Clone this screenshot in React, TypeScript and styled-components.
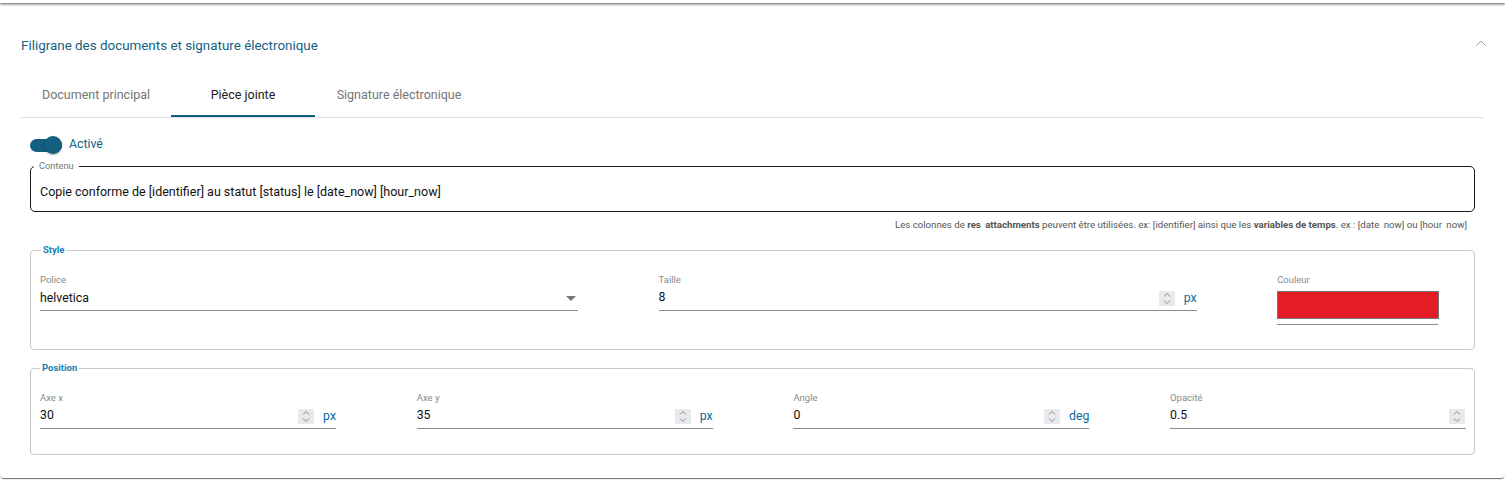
import React from 'react';
import styled, { createGlobalStyle } from 'styled-components';

const PRIMARY = '#135f7f';
const LINK = '#0b6a9a';
const LEGEND = '#1580b4';

const GlobalStyle = createGlobalStyle`
  html, body {
    margin: 0;
    padding: 0;
    background: #fff;
    font-family: Roboto, "Liberation Sans", sans-serif;
  }
`;

const Page = styled.div`
  width: 1505px;
  height: 483px;
  overflow: hidden;
`;

const TopEdge = styled.div`
  height: 3px;
  background: #fff;
  box-shadow: 0 1px 3px rgba(0, 0, 0, 0.7);
`;

const Card = styled.section`
  margin-top: 13px;
  height: 462px;
  box-sizing: border-box;
  padding: 0 21px;
  border-radius: 4px;
  background: #fff;
  box-shadow: 0 2px 1px -1px rgba(0, 0, 0, 0.5), 0 1px 1px rgba(0, 0, 0, 0.14), 0 0 1px rgba(0, 0, 0, 0.03);
`;

const Header = styled.div`
  display: flex;
  align-items: center;
  justify-content: space-between;
  height: 55px;
  padding-top: 3px;
  box-sizing: border-box;
`;

const HeaderTitle = styled.h2`
  margin: 0;
  font-size: 13.4px;
  font-weight: 400;
  color: ${PRIMARY};
`;

const Chevron = styled.svg`
  width: 12px;
  height: 8px;
  margin-top: -4px;
  margin-right: -3px;
`;

const Tabs = styled.div`
  display: flex;
  height: 47px;
  box-sizing: border-box;
  border-bottom: 1px solid #e0e0e0;
`;

const Tab = styled.div<{ $active?: boolean; $width: number }>`
  display: flex;
  align-items: center;
  justify-content: center;
  width: ${props => props.$width}px;
  height: 46px;
  padding-top: 2px;
  box-sizing: border-box;
  font-size: 12.5px;
  color: ${props => (props.$active ? '#212121' : '#757575')};
  border-bottom: 2px solid ${props => (props.$active ? PRIMARY : 'transparent')};
`;

const Content = styled.div`
  padding: 18px 9px 0;
`;

const ToggleRow = styled.div`
  display: flex;
  align-items: center;
  gap: 7px;
  height: 18px;
`;

const ToggleTrack = styled.div`
  position: relative;
  width: 32px;
  height: 13px;
  border-radius: 7px;
  background: ${PRIMARY};
`;

const ToggleThumb = styled.div`
  position: absolute;
  top: -3px;
  right: 0;
  width: 18px;
  height: 18px;
  border-radius: 50%;
  background: ${PRIMARY};
  box-shadow: 0 1px 2px rgba(0, 0, 0, 0.35);
`;

const ToggleLabel = styled.span`
  margin-top: -2px;
  font-size: 12.3px;
  color: ${PRIMARY};
`;

const ContentField = styled.fieldset`
  margin: 6px 0 0;
  padding: 0 9px;
  min-width: 0;
  height: 52px;
  box-sizing: border-box;
  border: 1px solid #1a1a1a;
  border-radius: 5px;
`;

const ContentLegend = styled.legend`
  margin-left: -6px;
  padding: 0 5px;
  font-size: 9.3px;
  line-height: 12px;
  color: #757575;
`;

const ContentValue = styled.div`
  padding-top: 1px;
  font-size: 12.5px;
  line-height: 38px;
  color: #111;
`;

const Hint = styled.p`
  margin: 7px 8px 0 0;
  font-size: 9.66px;
  line-height: 12px;
  text-align: right;
  color: #555;
`;

// les soulignés n'apparaissent pas sur la capture
const Blank = styled.span`
  color: transparent;
`;

const Group = styled.fieldset<{ $top: number; $bottom: number }>`
  margin: ${props => props.$top}px 0 0;
  padding: 18px 9px ${props => props.$bottom}px;
  min-width: 0;
  box-sizing: border-box;
  border: 1px solid #c8c8c8;
  border-radius: 4px;
`;

const GroupLegend = styled.legend<{ $shift: number }>`
  margin-left: ${props => props.$shift}px;
  padding: 0 2px;
  font-size: 9.5px;
  font-weight: 700;
  line-height: 12px;
  color: ${LEGEND};
`;

const StyleGrid = styled.div`
  display: grid;
  grid-template-columns: 538px 538px 161px;
  column-gap: 80.6px;
  align-items: start;
`;

const PositionGrid = styled.div`
  display: grid;
  grid-template-columns: repeat(4, 296px);
  column-gap: 80.7px;
`;

const FieldLabel = styled.label`
  display: block;
  font-size: 9.5px;
  line-height: 12px;
  color: #8a8a8a;
`;

const Control = styled.div`
  display: flex;
  align-items: center;
  height: 25px;
  box-sizing: border-box;
  border-bottom: 1px solid #8c8c8c;
`;

const Value = styled.span<{ $raised?: boolean }>`
  flex: 1;
  margin-top: ${props => (props.$raised ? '-3px' : '0')};
  font-size: 12.3px;
  color: #111;
`;

const Spinner = styled.svg`
  flex: none;
  width: 16px;
  height: 15px;
  margin-right: 1px;
  background: #e9e9ed;
`;

const Unit = styled.span`
  flex: none;
  margin-left: 8px;
  font-size: 12.3px;
  color: ${LINK};
`;

const SelectArrow = styled.div`
  width: 0;
  height: 0;
  margin-right: 2px;
  border-left: 5px solid transparent;
  border-right: 5px solid transparent;
  border-top: 5px solid #757575;
`;

const ColorControl = styled.div`
  height: 39px;
  box-sizing: border-box;
  padding-top: 5px;
  border-bottom: 1px solid #8c8c8c;
`;

const ColorSwatch = styled.div`
  width: 162px;
  height: 28px;
  box-sizing: border-box;
  border: 1px solid #767676;
  background: #e31c25;
`;

const Stepper = () => (
  <Spinner viewBox="0 0 16 15" fill="none" stroke="#8a8a8a" strokeWidth="1">
    <path d="M5 5.5 8 2.5l3 3" />
    <path d="M5 9.5l3 3 3-3" />
  </Spinner>
);

const NumberField = ({ label, value, unit }: { label: string; value: string; unit?: string }) => (
  <div>
    <FieldLabel>{label}</FieldLabel>
    <Control>
      <Value $raised>{value}</Value>
      <Stepper />
      {unit && <Unit>{unit}</Unit>}
    </Control>
  </div>
);

const POSITION_FIELDS = [
  { label: 'Axe x', value: '30', unit: 'px' },
  { label: 'Axe y', value: '35', unit: 'px' },
  { label: 'Angle', value: '0', unit: 'deg' },
  { label: 'Opacité', value: '0.5' },
];

export default function App() {
  return (
    <Page>
      <GlobalStyle />
      <TopEdge />
      <Card>
        <Header>
          <HeaderTitle>Filigrane des documents et signature électronique</HeaderTitle>
          <Chevron viewBox="0 0 12 8" fill="none" stroke="#9a9a9a" strokeWidth="1">
            <path d="M1.5 6.5 6 2l4.500 4.500" />
          </Chevron>
        </Header>
        <Tabs>
          <Tab $width={150}>Document principal</Tab>
          <Tab $width={144} $active>Pièce jointe</Tab>
          <Tab $width={168}>Signature électronique</Tab>
        </Tabs>
        <Content>
          <ToggleRow>
            <ToggleTrack>
              <ToggleThumb />
            </ToggleTrack>
            <ToggleLabel>Activé</ToggleLabel>
          </ToggleRow>
          <ContentField>
            <ContentLegend>Contenu</ContentLegend>
            <ContentValue>Copie conforme de [identifier] au statut [status] le [date_now] [hour_now]</ContentValue>
          </ContentField>
          <Hint>
            Les colonnes de <b>res<Blank>_</Blank>attachments</b> peuvent être utilisées. ex: [identifier] ainsi que les{' '}
            <b>variables de temps</b>. ex : [date<Blank>_</Blank>now] ou [hour<Blank>_</Blank>now]
          </Hint>
          <Group $top={13} $bottom={24}>
            <GroupLegend $shift={1}>Style</GroupLegend>
            <StyleGrid>
              <div>
                <FieldLabel>Police</FieldLabel>
                <Control>
                  <Value>helvetica</Value>
                  <SelectArrow />
                </Control>
              </div>
              <NumberField label="Taille" value="8" unit="px" />
              <div>
                <FieldLabel>Couleur</FieldLabel>
                <ColorControl>
                  <ColorSwatch />
                </ColorControl>
              </div>
            </StyleGrid>
          </Group>
          <Group $top={12} $bottom={25}>
            <GroupLegend $shift={0}>Position</GroupLegend>
            <PositionGrid>
              {POSITION_FIELDS.map(field => (
                <NumberField key={field.label} {...field} />
              ))}
            </PositionGrid>
          </Group>
        </Content>
      </Card>
    </Page>
  );
}
